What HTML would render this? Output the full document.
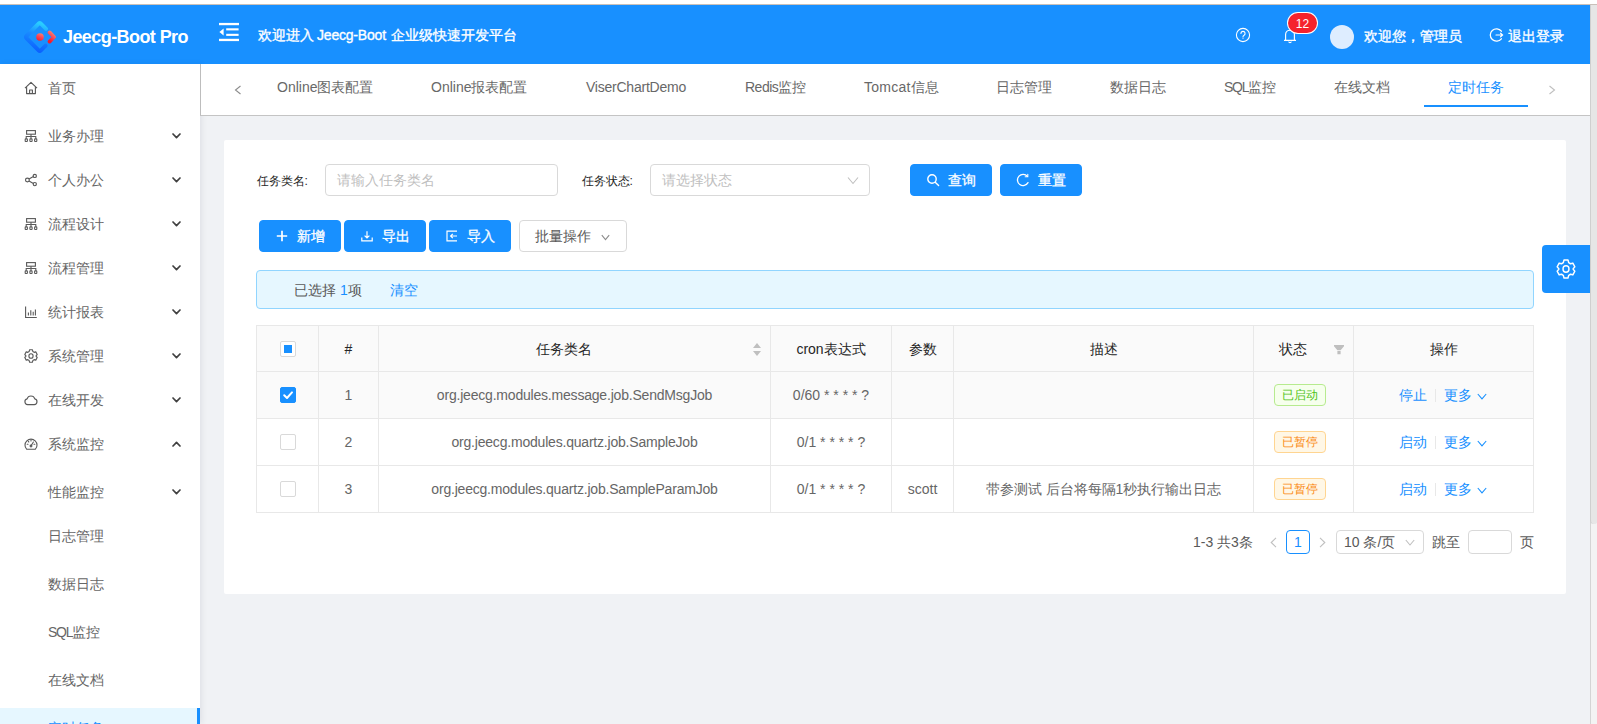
<!DOCTYPE html>
<html lang="zh">
<head>
<meta charset="utf-8">
<title>Jeecg-Boot</title>
<style>
*{box-sizing:border-box;margin:0;padding:0}
html,body{width:1597px;height:724px;overflow:hidden;background:#fff}
body{font-family:"Liberation Sans",sans-serif;font-size:14px;color:#595959;position:relative}
.abs{position:absolute}
#topline{left:0;top:4px;width:1597px;height:1px;background:#c9c0b9}
#page{left:0;top:5px;width:1590px;height:719px;background:#f0f2f5;overflow:hidden}
#scroll{left:1590px;top:5px;width:7px;height:719px;background:#f3f3f3;border-left:1px solid #d4d4d4}
#thumb{left:-1px;top:0;width:8px;height:519px;background:#e6e6e6;border-radius:0 0 4px 4px;border-left:1px solid #cfcfcf}
/* header */
#header{left:0;top:0;width:1590px;height:59px;background:#1890ff;color:#fff}
#logo-t{left:63px;top:20px;letter-spacing:-.58px;font-size:18px;font-weight:bold;line-height:24px;white-space:nowrap}
#welcome{left:258px;top:19px;font-size:14px;line-height:22px;white-space:nowrap;font-weight:normal}
/* sidebar */
#side{left:0;top:59px;width:200px;height:660px;background:#fff;box-shadow:2px 0 6px rgba(0,21,41,.07)}
.mi{position:absolute;left:0;width:200px;height:40px;line-height:40px;color:#666;font-size:14px}
.mi .tx{position:absolute;left:48px;top:0;white-space:nowrap}
.mi svg.ic{position:absolute;left:24px;top:13px;width:14px;height:14px}
.mi svg.ar{position:absolute;left:172px;top:16px;width:9px;height:8px}
/* tabs */
#tabs{left:200px;top:59px;width:1390px;height:52px;background:#fff;border-left:1px solid #bdbdbd;border-bottom:1px solid #c4c4c4}
.tab{position:absolute;top:12px;height:22px;line-height:22px;font-size:14px;color:#686868;white-space:nowrap}

.mi.sel{background:#e6f7ff;color:#1890ff;border-right:3px solid #1890ff}
.tab.act{color:#1890ff}
#ink{left:1223px;top:41px;width:104px;height:2px;background:#1890ff}

#badge{left:1288px;top:8px;width:29px;padding-top:1px;height:20px;border-radius:10px;background:#f5222d;box-shadow:0 0 0 1px #fff;font-size:12px;line-height:20px;text-align:center;color:#fff}
#avatar{left:1330px;top:20px;width:24px;height:24px;border-radius:12px;background:#deedff}
.htx{top:20px;height:22px;line-height:22px;font-size:14px;white-space:nowrap;color:#fff;font-weight:normal}

#card{left:224px;top:135px;width:1342px;height:454px;background:#fff;border-radius:2px}
.lbl{font-size:12px;line-height:22px;height:22px;color:#262626;white-space:nowrap}
.inp{height:32px;border:1px solid #d9d9d9;border-radius:4px;background:#fff}
.inp .ph{position:absolute;left:11px;top:4px;line-height:22px;color:#bfbfbf;white-space:nowrap}
.btn{height:32px;border:1px solid #d9d9d9;border-radius:4px;background:#fff;color:#595959}
.btn.pri{background:#1890ff;border-color:#1890ff;color:#fff}
.btn .bt{top:4px;line-height:22px;white-space:nowrap}
#alert{left:32px;top:130px;width:1278px;height:39px;background:#e6f7ff;border:1px solid #91d5ff;border-radius:4px;line-height:22px;white-space:nowrap}
#alert b{color:#1890ff;font-weight:normal}
#tbl{left:32px;top:185px;width:1278px;height:189px}
.pg{height:22px;line-height:22px;white-space:nowrap}
#pcur{left:1062px;top:390px;width:24px;height:24px;border:1px solid #1890ff;border-radius:4px;color:#1890ff;text-align:center;line-height:22px}
#psize{left:1112px;top:390px;width:88px;height:24px;border:1px solid #d9d9d9;border-radius:4px;line-height:22px;white-space:nowrap}
#pjump{left:1244px;top:390px;width:44px;height:24px;border:1px solid #d9d9d9;border-radius:4px}
#gear{left:1542px;top:240px;width:48px;height:48px;background:#1890ff;border-radius:4px 0 0 4px}

#tbl table{border-collapse:separate;border-spacing:0;table-layout:fixed;width:1278px;border-left:1px solid #e8e8e8;border-top:1px solid #e8e8e8}
#tbl th,#tbl td{border-right:1px solid #e8e8e8;border-bottom:1px solid #e8e8e8;text-align:center;vertical-align:middle;padding:0 8px;font-size:14px;line-height:22px;white-space:nowrap;position:relative;font-weight:normal}
#tbl th{height:46px;background:#fafafa;color:#262626;font-weight:normal}
#tbl td{height:47px;color:#666}
#tbl tr.sel td{background:#fafafa}
#tbl th.srt,#tbl th.flt{padding-right:30px}
.so{position:absolute;left:374px;top:17px;width:8px;height:13px}
.fi{position:absolute;left:80px;top:19px;width:10px;height:10px}
.cb{display:inline-block;width:16px;height:16px;border:1px solid #d9d9d9;border-radius:2px;background:#fff;vertical-align:middle;position:relative;top:-1px}
.cb.on{background:#1890ff;border-color:#1890ff}
.cb svg{position:absolute;left:-1px;top:-1px;width:16px;height:16px}
.cb .ind{position:absolute;left:3px;top:3px;width:8px;height:8px;background:#1890ff}
.tag{display:inline-block;height:22px;line-height:20px;padding:0 7px;font-size:12px;border:1px solid;border-radius:4px;margin-right:8px;vertical-align:middle;position:relative;top:-1px}
.tag.g{color:#52c41a;background:#f6ffed;border-color:#b7eb8f}
.tag.o{color:#fa8c16;background:#fff7e6;border-color:#ffd591}
.lk{color:#1890ff}
.dv{display:inline-block;width:1px;height:13px;background:#e8e8e8;margin:0 8px;vertical-align:middle;position:relative;top:-1px}
.dn{display:inline-block;width:10px;height:7px;margin-left:5px;vertical-align:middle}
#tbl td.ls{letter-spacing:-.2px}
.l4{letter-spacing:-.5px}
.l13{letter-spacing:-1.3px}
#tbl td:last-child{padding-right:10px}
#wl{font-weight:normal;margin:0 5px 0 3px;font-size:14px;letter-spacing:-.2px}
#welcome,.htx{-webkit-text-stroke:.35px #fff}
.btn.pri .bt{-webkit-text-stroke:.3px #fff}
</style>
</head>
<body>
<div id="topline" class="abs"></div>
<div id="page" class="abs">
  <div id="header" class="abs">
    <div id="logo-t" class="abs">Jeecg-Boot Pro</div>
    
    <svg class="abs" style="left:24px;top:16px;width:32px;height:32px" viewBox="0 0 32 32" fill="none">
      <defs>
        <linearGradient id="lg1" x1="0.6" y1="0" x2="0.4" y2="1"><stop offset="0" stop-color="#29cdff"/><stop offset=".4" stop-color="#1a8bff"/><stop offset="1" stop-color="#0a60ff"/></linearGradient>
        <linearGradient id="lg2" x1="0.7" y1="0" x2="0.3" y2="1"><stop offset="0" stop-color="#fa816e"/><stop offset=".45" stop-color="#f74a5c"/><stop offset="1" stop-color="#f51d2c"/></linearGradient>
      </defs>
      <path d="M22 7.8 16.6 2.4a1.2 1.2 0 0 0-1.7 0L2.4 15a1.4 1.4 0 0 0 0 2L14.9 29.6a1.2 1.2 0 0 0 1.7 0L21.6 24.6" stroke="url(#lg1)" stroke-width="4" stroke-linecap="round" stroke-linejoin="round"/>
      <path d="M25.6 11.4 30 16l-4.4 4.6" stroke="url(#lg2)" stroke-width="3.8" stroke-linecap="round" stroke-linejoin="round"/>
      <circle cx="16" cy="16" r="3.8" fill="url(#lg2)"/>
    </svg>
    <svg class="abs" style="left:219px;top:17px;width:20px;height:20px" viewBox="0 0 20 20" fill="#fff">
      <rect x="0" y="0.9" width="20" height="2.3"/><rect x="7.2" y="6.3" width="12.4" height="2.1"/><rect x="7.2" y="11.8" width="12.4" height="2.1"/><rect x="0" y="16.8" width="20" height="2.3"/><path d="M0.4 10 4.6 6.6v6.8z"/>
    </svg>
    <svg class="abs" style="left:1235px;top:22px;width:16px;height:16px" viewBox="0 0 16 16" fill="none" stroke="#fff" stroke-width="1.1"><circle cx="8" cy="8" r="6.6"/><path d="M5.9 6.4a2.1 2.1 0 1 1 3 2c-.6.4-.9.7-.9 1.5" stroke-linecap="round"/><circle cx="8" cy="11.6" r=".5" fill="#fff" stroke="none"/></svg>
    <svg class="abs" style="left:1283px;top:23px;width:14px;height:16px" viewBox="0 0 14 16" fill="none" stroke="#fff" stroke-width="1.15" stroke-linejoin="round"><path d="M1 12.4h12M2.6 12.4V6.6a4.4 4.4 0 0 1 8.8 0v5.8M5.6 13.6a1.5 1.5 0 0 0 2.8 0"/></svg>
    <div class="abs" id="badge">12</div>
    <div class="abs" id="avatar"></div>
    <div class="abs htx" style="left:1364px">欢迎您，管理员</div>
    <svg class="abs" style="left:1489px;top:22px;width:15px;height:16px" viewBox="0 0 15 16" fill="none" stroke="#fff" stroke-width="1.3" stroke-linecap="round"><path d="M12.4 4.2A6.2 6.2 0 1 0 12.4 11.8"/><path d="M7 8h6.4M11.6 6.2 13.6 8l-2 1.8" stroke-width="1.2"/></svg>
    <div class="abs htx" style="left:1508px">退出登录</div>
    <div id="welcome" class="abs">欢迎进入<span id="wl">Jeecg-Boot</span>企业级快速开发平台</div>
  </div>
  <div id="side" class="abs">
<div class="mi" style="top:4px"><svg class="ic" viewBox="0 0 14 14" fill="none" stroke="#595959" stroke-width="1.15" stroke-linejoin="round"><path d="M1 7.2 7 1.4l6 5.8M2.6 6.2v6.4h8.8V6.2M5.6 12.6V9h2.8v3.6"/></svg><span class="tx">首页</span></div>
<div class="mi" style="top:52px"><svg class="ic" viewBox="0 0 14 14" fill="none" stroke="#595959" stroke-width="1.1"><rect x="2.6" y="1.6" width="8.8" height="3.6"/><path d="M7 5.2v2.3M2.2 9.8V7.5h9.6v2.3M7 7.5v2.3"/><rect x="1.2" y="9.9" width="2.2" height="2.6" rx=".6"/><rect x="5.9" y="9.9" width="2.2" height="2.6" rx=".6"/><rect x="10.6" y="9.9" width="2.2" height="2.6" rx=".6"/></svg><span class="tx">业务办理</span><svg class="ar" viewBox="0 0 9 6" fill="none" stroke="#404040" stroke-width="1.7" stroke-linecap="round" stroke-linejoin="round"><path d="M1 1 4.5 4.6 8 1"/></svg></div>
<div class="mi" style="top:96px"><svg class="ic" viewBox="0 0 14 14" fill="none" stroke="#595959" stroke-width="1.15"><circle cx="3.4" cy="7" r="1.9"/><circle cx="10.8" cy="2.9" r="1.6"/><circle cx="10.8" cy="11.1" r="1.6"/><path d="M5 6 9.4 3.6M5 8l4.4 2.4"/></svg><span class="tx">个人办公</span><svg class="ar" viewBox="0 0 9 6" fill="none" stroke="#404040" stroke-width="1.7" stroke-linecap="round" stroke-linejoin="round"><path d="M1 1 4.5 4.6 8 1"/></svg></div>
<div class="mi" style="top:140px"><svg class="ic" viewBox="0 0 14 14" fill="none" stroke="#595959" stroke-width="1.1"><rect x="2.6" y="1.6" width="8.8" height="3.6"/><path d="M7 5.2v2.3M2.2 9.8V7.5h9.6v2.3M7 7.5v2.3"/><rect x="1.2" y="9.9" width="2.2" height="2.6" rx=".6"/><rect x="5.9" y="9.9" width="2.2" height="2.6" rx=".6"/><rect x="10.6" y="9.9" width="2.2" height="2.6" rx=".6"/></svg><span class="tx">流程设计</span><svg class="ar" viewBox="0 0 9 6" fill="none" stroke="#404040" stroke-width="1.7" stroke-linecap="round" stroke-linejoin="round"><path d="M1 1 4.5 4.6 8 1"/></svg></div>
<div class="mi" style="top:184px"><svg class="ic" viewBox="0 0 14 14" fill="none" stroke="#595959" stroke-width="1.1"><rect x="2.6" y="1.6" width="8.8" height="3.6"/><path d="M7 5.2v2.3M2.2 9.8V7.5h9.6v2.3M7 7.5v2.3"/><rect x="1.2" y="9.9" width="2.2" height="2.6" rx=".6"/><rect x="5.9" y="9.9" width="2.2" height="2.6" rx=".6"/><rect x="10.6" y="9.9" width="2.2" height="2.6" rx=".6"/></svg><span class="tx">流程管理</span><svg class="ar" viewBox="0 0 9 6" fill="none" stroke="#404040" stroke-width="1.7" stroke-linecap="round" stroke-linejoin="round"><path d="M1 1 4.5 4.6 8 1"/></svg></div>
<div class="mi" style="top:228px"><svg class="ic" viewBox="0 0 14 14" fill="none" stroke="#595959" stroke-width="1.1"><path d="M1.6 1.5v11h11.2M4.4 10.5V7.4M6.8 10.5V5.2M9.2 10.5V6.8M11.4 10.5V4.4"/></svg><span class="tx">统计报表</span><svg class="ar" viewBox="0 0 9 6" fill="none" stroke="#404040" stroke-width="1.7" stroke-linecap="round" stroke-linejoin="round"><path d="M1 1 4.5 4.6 8 1"/></svg></div>
<div class="mi" style="top:272px"><svg class="ic" viewBox="0 0 14 14" fill="none" stroke="#595959" stroke-width="1.1" stroke-linejoin="round"><g transform="translate(0,-.56) scale(1,1.08)"><path d="M5.6 1.2h2.8l.5 1.7 1.2.7 1.7-.4 1.4 2.4-1.2 1.3v.2l1.2 1.3-1.4 2.4-1.7-.4-1.2.7-.5 1.7H5.6l-.5-1.7-1.2-.7-1.7.4L.8 8.4 2 7.1v-.2L.8 5.6l1.4-2.4 1.7.4 1.2-.7z"/><circle cx="7" cy="7" r="2.1"/></g></svg><span class="tx">系统管理</span><svg class="ar" viewBox="0 0 9 6" fill="none" stroke="#404040" stroke-width="1.7" stroke-linecap="round" stroke-linejoin="round"><path d="M1 1 4.5 4.6 8 1"/></svg></div>
<div class="mi" style="top:316px"><svg class="ic" viewBox="0 0 14 14" fill="none" stroke="#595959" stroke-width="1.15" stroke-linejoin="round"><path d="M3.6 11.6a2.9 2.9 0 0 1-.5-5.7 4 4 0 0 1 7.7 0 2.9 2.9 0 0 1-.5 5.7z"/></svg><span class="tx">在线开发</span><svg class="ar" viewBox="0 0 9 6" fill="none" stroke="#404040" stroke-width="1.7" stroke-linecap="round" stroke-linejoin="round"><path d="M1 1 4.5 4.6 8 1"/></svg></div>
<div class="mi" style="top:360px"><svg class="ic" viewBox="0 0 14 14" fill="none" stroke="#595959" stroke-width="1.1" stroke-linecap="round"><path d="M2.6 12.2a6 6 0 1 1 8.8 0z" stroke-linejoin="round"/><path d="M7 8.8 9.4 5M3.2 7.2h.8M10 7.2h.8M7 3.2v.7M4.3 4.5l.5.5"/><circle cx="7" cy="9" r=".9"/></svg><span class="tx">系统监控</span><svg class="ar" viewBox="0 0 9 6" fill="none" stroke="#404040" stroke-width="1.7" stroke-linecap="round" stroke-linejoin="round"><path d="M1 5 4.5 1.4 8 5"/></svg></div>
<div class="mi" style="top:408px"><span class="tx">性能监控</span><svg class="ar" viewBox="0 0 9 6" fill="none" stroke="#404040" stroke-width="1.7" stroke-linecap="round" stroke-linejoin="round"><path d="M1 1 4.5 4.6 8 1"/></svg></div>
<div class="mi" style="top:452px"><span class="tx">日志管理</span></div>
<div class="mi" style="top:500px"><span class="tx">数据日志</span></div>
<div class="mi" style="top:548px"><span class="tx"><span class="l13">SQL</span>监控</span></div>
<div class="mi" style="top:596px"><span class="tx">在线文档</span></div>
<div class="mi sel" style="top:644px"><span class="tx">定时任务</span></div>
</div>
  <div id="tabs" class="abs">
<div class="tab" style="left:76px">Online图表配置</div>
<div class="tab" style="left:230px">Online报表配置</div>
<div class="tab" style="left:385px;letter-spacing:-.23px">ViserChartDemo</div>
<div class="tab" style="left:544px"><span class="l4">Redis</span>监控</div>
<div class="tab" style="left:663px"><span style="letter-spacing:.25px">Tomcat</span>信息</div>
<div class="tab" style="left:795px">日志管理</div>
<div class="tab" style="left:909px">数据日志</div>
<div class="tab" style="left:1023px"><span class="l13">SQL</span>监控</div>
<div class="tab" style="left:1133px">在线文档</div>
<div class="tab act" style="left:1247px">定时任务</div>
<div class="abs" id="ink"></div>
<svg class="abs" style="left:33px;top:21px;width:8px;height:10px" viewBox="0 0 8 10" fill="none" stroke="#8c8c8c" stroke-width="1.1"><path d="M6.5 1 1.5 5l5 4"/></svg>
<svg class="abs" style="left:1347px;top:21px;width:8px;height:10px" viewBox="0 0 8 10" fill="none" stroke="#bfbfbf" stroke-width="1.1"><path d="M1.5 1l5 4-5 4"/></svg>
</div>

  <div id="card" class="abs">
    <!-- search row : card origin = (224,135) page coords -->
    <div class="abs lbl" style="left:32.5px;top:30px">任务类名:</div>
    <div class="abs inp" style="left:101px;top:24px;width:233px"><span class="ph">请输入任务类名</span></div>
    <div class="abs lbl" style="left:357.5px;top:30px">任务状态:</div>
    <div class="abs inp" style="left:426px;top:24px;width:220px"><span class="ph">请选择状态</span>
      <svg class="abs" style="left:196px;top:11px;width:12px;height:9px" viewBox="0 0 12 9" fill="none" stroke="#bfbfbf" stroke-width="1.1"><path d="M1 1.5 6 7.5l5-6"/></svg>
    </div>
    <div class="abs btn pri" style="left:686px;top:24px;width:82px">
      <svg class="abs" style="left:15px;top:8px;width:14px;height:14px" viewBox="0 0 14 14" fill="none" stroke="#fff" stroke-width="1.4"><circle cx="6" cy="6" r="4.2"/><path d="M9.2 9.2 12.6 12.6" stroke-linecap="round"/></svg>
      <span class="abs bt" style="left:37px">查询</span></div>
    <div class="abs btn pri" style="left:776px;top:24px;width:82px">
      <svg class="abs" style="left:15px;top:8px;width:14px;height:14px" viewBox="0 0 14 14" fill="none" stroke="#fff" stroke-width="1.3" stroke-linecap="round"><path d="M12 9.6A5.6 5.6 0 1 1 11.4 3.4"/><path d="M11.8 1.2v2.6H9.2" stroke-width="1.1"/></svg>
      <span class="abs bt" style="left:37px">重置</span></div>

    <!-- action row -->
    <div class="abs btn pri" style="left:35px;top:80px;width:82px">
      <svg class="abs" style="left:16px;top:9px;width:12px;height:12px" viewBox="0 0 12 12" fill="none" stroke="#fff" stroke-width="1.7"><path d="M6 .8v10.4M.8 6h10.4"/></svg>
      <span class="abs bt" style="left:37px">新增</span></div>
    <div class="abs btn pri" style="left:120px;top:80px;width:82px">
      <svg class="abs" style="left:15px;top:8px;width:14px;height:14px" viewBox="0 0 14 14" fill="none" stroke="#fff" stroke-width="1.2"><path d="M7 2.2v6.6M4.6 6.6 7 9l2.4-2.4M1.8 8.6v3.2h10.4V8.6"/></svg>
      <span class="abs bt" style="left:37px">导出</span></div>
    <div class="abs btn pri" style="left:205px;top:80px;width:82px">
      <svg class="abs" style="left:15px;top:8px;width:14px;height:14px" viewBox="0 0 14 14" fill="none" stroke="#fff" stroke-width="1.2"><path d="M12 2.2H2v9.6h10M12 7H5.6M7.8 4.8 5.6 7l2.2 2.2"/></svg>
      <span class="abs bt" style="left:37px">导入</span></div>
    <div class="abs btn" style="left:295px;top:80px;width:108px">
      <span class="abs bt" style="left:15px">批量操作</span>
      <svg class="abs" style="left:81px;top:13px;width:9px;height:7px" viewBox="0 0 9 7" fill="none" stroke="#8c8c8c" stroke-width="1.1"><path d="M.8 1.2 4.5 5.6 8.2 1.2"/></svg>
    </div>

    <!-- alert -->
    <div class="abs" id="alert"><span class="abs" style="left:37px;top:8px">已选择 <b>1</b>项</span><span class="abs" style="left:133px;top:8px;color:#1890ff">清空</span></div>

    <!-- table -->
    <div class="abs" id="tbl">
<table><colgroup><col style="width:62px"><col style="width:60px"><col style="width:392px"><col style="width:121px"><col style="width:62px"><col style="width:300px"><col style="width:100px"><col style="width:180px"></colgroup>
<tr class="hd"><th><span class="cb"><i class="ind"></i></span></th><th>#</th><th class="srt">任务类名<svg class="so" viewBox="0 0 8 13" fill="#bfbfbf"><path d="M4 0 8 5H0zM4 13 0 8h8z"/></svg></th><th>cron表达式</th><th>参数</th><th>描述</th><th class="flt">状态<svg class="fi" viewBox="0 0 10 10" fill="#bfbfbf"><path d="M0 0h10v1.2L6.6 5.2H3.4L0 1.2zM3.4 6h3.2v3.2H3.4z"/></svg></th><th>操作</th></tr>
<tr class="sel"><td><span class="cb on"><svg viewBox="0 0 16 16" fill="none" stroke="#fff" stroke-width="2" stroke-linecap="round" stroke-linejoin="round"><path d="M4.2 8.2 7 11l5-5.6"/></svg></span></td><td>1</td><td class="ls">org.jeecg.modules.message.job.SendMsgJob</td><td>0/60 * * * * ?</td><td></td><td></td><td><span class="tag g">已启动</span></td><td><span class="lk">停止</span><i class="dv"></i><span class="lk">更多</span><svg class="dn" viewBox="0 0 10 7" fill="none" stroke="#1890ff" stroke-width="1.1"><path d="M.8 1 5 5.8 9.2 1"/></svg></td></tr>
<tr><td><span class="cb"></span></td><td>2</td><td class="ls">org.jeecg.modules.quartz.job.SampleJob</td><td>0/1 * * * * ?</td><td></td><td></td><td><span class="tag o">已暂停</span></td><td><span class="lk">启动</span><i class="dv"></i><span class="lk">更多</span><svg class="dn" viewBox="0 0 10 7" fill="none" stroke="#1890ff" stroke-width="1.1"><path d="M.8 1 5 5.8 9.2 1"/></svg></td></tr>
<tr><td><span class="cb"></span></td><td>3</td><td class="ls">org.jeecg.modules.quartz.job.SampleParamJob</td><td>0/1 * * * * ?</td><td>scott</td><td>带参测试 后台将每隔1秒执行输出日志</td><td><span class="tag o">已暂停</span></td><td><span class="lk">启动</span><i class="dv"></i><span class="lk">更多</span><svg class="dn" viewBox="0 0 10 7" fill="none" stroke="#1890ff" stroke-width="1.1"><path d="M.8 1 5 5.8 9.2 1"/></svg></td></tr>
</table>
</div>

    <!-- pagination -->
    <div class="abs pg" style="left:969px;top:391px">1-3 共3条</div>
    <svg class="abs" style="left:1046px;top:397px;width:7px;height:11px" viewBox="0 0 7 11" fill="none" stroke="#bfbfbf" stroke-width="1.1"><path d="M6 .8 1.2 5.5 6 10.2"/></svg>
    <div class="abs" id="pcur">1</div>
    <svg class="abs" style="left:1095px;top:397px;width:7px;height:11px" viewBox="0 0 7 11" fill="none" stroke="#bfbfbf" stroke-width="1.1"><path d="M1 .8l4.8 4.7L1 10.2"/></svg>
    <div class="abs" id="psize"><span class="abs" style="left:7px;top:0">10 条/页</span>
      <svg class="abs" style="left:68px;top:8px;width:10px;height:7px" viewBox="0 0 10 7" fill="none" stroke="#bfbfbf" stroke-width="1.1"><path d="M.8 1 5 6l4.2-5"/></svg></div>
    <div class="abs pg" style="left:1208px;top:391px">跳至</div>
    <div class="abs" id="pjump"></div>
    <div class="abs pg" style="left:1296px;top:391px">页</div>
  </div>
  <div class="abs" id="gear">
    <svg class="abs" style="left:14px;top:14px;width:20px;height:20px" viewBox="0 0 14 14" fill="none" stroke="#fff" stroke-width="1" stroke-linejoin="round"><g transform="translate(0,-.56) scale(1,1.08)"><path d="M5.6 1.2h2.8l.5 1.7 1.2.7 1.7-.4 1.4 2.4-1.2 1.3v.2l1.2 1.3-1.4 2.4-1.7-.4-1.2.7-.5 1.7H5.6l-.5-1.7-1.2-.7-1.7.4L.8 8.4 2 7.1v-.2L.8 5.6l1.4-2.4 1.7.4 1.2-.7z"/><circle cx="7" cy="7" r="2.1"/></g></svg>
  </div>
</div>
<div id="scroll" class="abs"><div id="thumb" class="abs"></div></div>
</body>
</html>
